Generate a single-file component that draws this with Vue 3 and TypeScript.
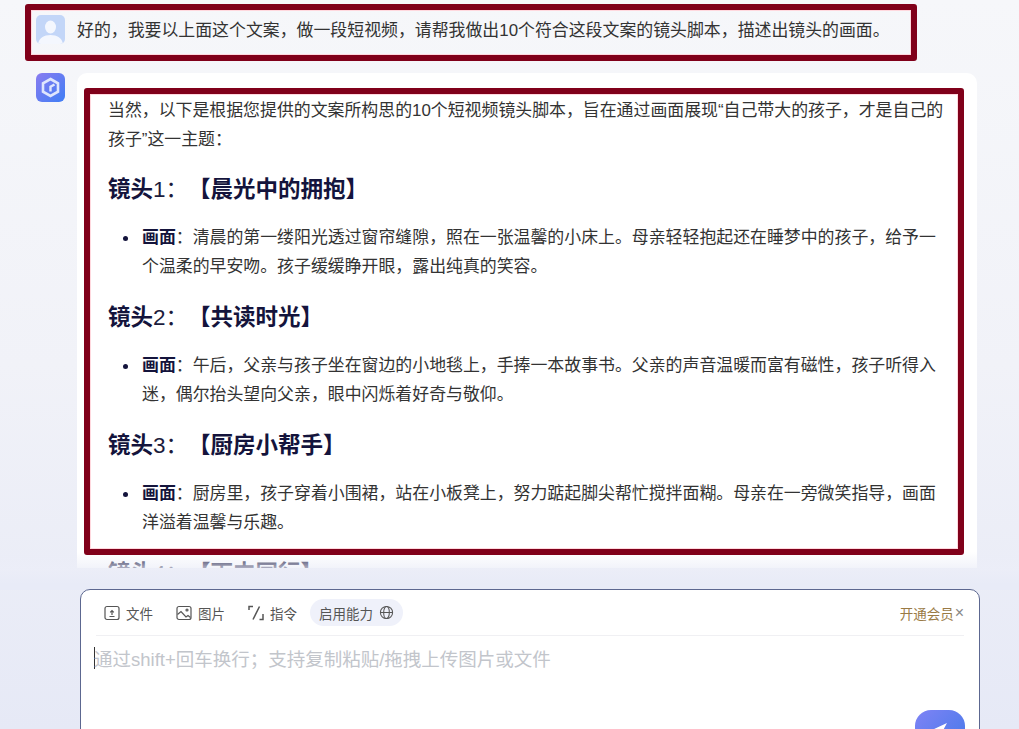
<script setup lang="ts">
interface Shot {
  no: number
  title: string
  body: string
}

const shots: Shot[] = [
  {
    no: 1,
    title: '【晨光中的拥抱】',
    body: '清晨的第一缕阳光透过窗帘缝隙，照在一张温馨的小床上。母亲轻轻抱起还在睡梦中的孩子，给予一个温柔的早安吻。孩子缓缓睁开眼，露出纯真的笑容。'
  },
  {
    no: 2,
    title: '【共读时光】',
    body: '午后，父亲与孩子坐在窗边的小地毯上，手捧一本故事书。父亲的声音温暖而富有磁性，孩子听得入迷，偶尔抬头望向父亲，眼中闪烁着好奇与敬仰。'
  },
  {
    no: 3,
    title: '【厨房小帮手】',
    body: '厨房里，孩子穿着小围裙，站在小板凳上，努力踮起脚尖帮忙搅拌面糊。母亲在一旁微笑指导，画面洋溢着温馨与乐趣。'
  }
]
</script>

<template>
  <div class="page">
    <div class="user-row">
      <div class="user-avatar">
        <svg viewBox="0 0 29 29" width="29" height="29">
          <ellipse cx="14.5" cy="12" rx="5.5" ry="6.500" fill="#f4f7fe" />
          <path d="M2 29c1-6 6-9 12.500-9S26 23 27 29z" fill="#f4f7fe" />
        </svg>
      </div>
      <p class="user-text">好的，我要以上面这个文案，做一段短视频，请帮我做出10个符合这段文案的镜头脚本，描述出镜头的画面。</p>
    </div>

    <div class="answer-row">
      <div class="bot-avatar">
        <svg viewBox="0 0 29 29" width="29" height="29" fill="none">
          <path d="M14.500 6l7.500 4.300v8.400L14.500 23 7 18.700v-8.400z" stroke="#dfe6fd" stroke-width="2.600" />
          <path d="M18.500 11.500l-4 2.300v4.700" stroke="#dfe6fd" stroke-width="2.400" />
        </svg>
      </div>
      <div class="answer-card">
        <p class="intro">当然，以下是根据您提供的文案所构思的10个短视频镜头脚本，旨在通过画面展现“自己带大的孩子，才是自己的孩子”这一主题：</p>
        <section v-for="shot in shots" :key="shot.no" class="shot">
          <h3>镜头<span class="num">{{ shot.no }}：</span>{{ shot.title }}</h3>
          <ul>
            <li><b>画面</b>：{{ shot.body }}</li>
          </ul>
        </section>
        <h3 class="next">镜头<span class="num">4：</span>【雨中同行】</h3>
      </div>
    </div>

    <div class="fade"></div>

    <div class="composer">
      <div class="toolbar">
        <span class="tool">
          <svg viewBox="0 0 16 16" width="16" height="16" fill="none" stroke="#555" stroke-width="1.200">
            <rect x="1" y="1.500" width="14" height="13" rx="2" />
            <path d="M8 10V5.500M6.200 7.300L8 5.500l1.800 1.800M5.500 11.500h5" />
          </svg>
          文件
        </span>
        <span class="tool">
          <svg viewBox="0 0 16 16" width="16" height="16" fill="none" stroke="#555" stroke-width="1.200">
            <rect x="1" y="1.500" width="14" height="13" rx="2" />
            <circle cx="11" cy="5" r="1" />
            <path d="M1.500 9.500L5 6.500l5 5.500 2-1.500 2.500 2" />
          </svg>
          图片
        </span>
        <span class="tool">
          <svg viewBox="0 0 16 16" width="16" height="16" fill="none" stroke="#555" stroke-width="1.500">
            <path d="M1 5V1.500h4M11.500 1.500L5 14.500M15 9v5.500h-3.500" />
          </svg>
          指令
        </span>
        <span class="pill">
          启用能力
          <svg viewBox="0 0 16 16" width="15" height="15" fill="none" stroke="#555" stroke-width="1.100">
            <circle cx="8" cy="8" r="6.500" />
            <ellipse cx="8" cy="8" rx="3" ry="6.500" />
            <path d="M1.500 8h13" />
          </svg>
        </span>
        <span class="vip">开通会员<i>×</i></span>
      </div>
      <div class="input-area">
        <span class="caret"></span>
        <span class="placeholder">通过shift+回车换行；支持复制粘贴/拖拽上传图片或文件</span>
      </div>
      <button class="send" type="button" aria-label="发送">
        <svg viewBox="0 0 16 16" width="16" height="16">
          <path d="M15 1L1 7.500l4.500 2L7.500 15z" fill="#fff" />
        </svg>
      </button>
    </div>

    <!-- annotation frames drawn over the screenshot -->
    <div class="frame frame-top"></div>
    <div class="frame frame-main"></div>
  </div>
</template>

<style scoped>
.page {
  position: relative;
  width: 1019px;
  height: 729px;
  overflow: hidden;
  background: linear-gradient(180deg, #f6f7fa 0%, #f1f2f8 50%, #e6e9f6 100%);
  font-family: "Liberation Sans", "Noto Sans CJK SC", sans-serif;
  color: #333;
  text-spacing-trim: space-all;
}

.user-row {
  display: flex;
  align-items: flex-start;
  gap: 12px;
  padding: 15px 0 0 36px;
  height: 73px;
  box-sizing: border-box;
}

.user-avatar {
  width: 29px;
  height: 29px;
  border-radius: 5px;
  overflow: hidden;
  background: #c3d6f8;
  flex: none;
}

.user-avatar svg,
.bot-avatar svg {
  display: block;
}

.user-text {
  margin: 0;
  font-size: 16.9px;
  line-height: 32px;
  color: #333;
  white-space: nowrap;
}

.answer-row {
  display: flex;
  align-items: flex-start;
  gap: 12px;
  padding-left: 36px;
}

.bot-avatar {
  width: 29px;
  height: 29px;
  border-radius: 6px;
  background: linear-gradient(135deg, #8a7cf0, #3f7ef5);
  flex: none;
}

.answer-card {
  width: 900px;
  height: 495px;
  box-sizing: border-box;
  overflow: hidden;
  background: #fff;
  border-radius: 10px 10px 0 0;
  padding: 23px 32px 0 31px;
}

.intro {
  margin: 0 0 -1px;
  font-size: 16.9px;
  line-height: 29px;
}

.shot h3,
.next {
  margin: 21px 0 0;
  font-size: 22.5px;
  line-height: 32px;
  font-weight: 700;
  color: #14143c;
}

.num {
  font-weight: 400;
  color: #1c1c3c;
}

.shot ul {
  margin: 18px 0 0;
  padding: 0 0 0 34px;
  list-style: none;
}

.shot li {
  position: relative;
  font-size: 16.9px;
  line-height: 28.5px;
  color: #333;
}

.shot li::before {
  content: "";
  position: absolute;
  left: -19px;
  top: 12px;
  width: 5px;
  height: 5px;
  border-radius: 50%;
  background: #14143c;
}

.shot li b {
  color: #14143c;
}

.fade {
  position: absolute;
  left: 0;
  right: 0;
  top: 552px;
  height: 38px;
  background: linear-gradient(180deg, rgba(238, 240, 248, 0) 0%, rgba(236, 238, 248, 0.75) 45%, #e8ebf7 85%);
}

.composer {
  position: absolute;
  left: 80px;
  top: 589px;
  width: 900px;
  height: 170px;
  box-sizing: border-box;
  background: #fff;
  border: 1px solid #5c6790;
  border-radius: 10px;
  padding: 0 15px;
}

.toolbar {
  display: flex;
  align-items: center;
  height: 45px;
  padding: 0 0 0 8px;
  border-bottom: 1px solid #f0f0f3;
  font-size: 13.5px;
  color: #555;
}

.tool {
  display: flex;
  align-items: center;
  gap: 6px;
  margin-right: 23px;
}

.tool:nth-child(3) {
  margin-right: 13px;
}

.pill {
  display: flex;
  align-items: center;
  gap: 6px;
  height: 27px;
  padding: 0 9px;
  border-radius: 14px;
  background: #eff1fa;
}

.vip {
  display: flex;
  align-items: center;
  margin-left: auto;
  color: #9a7a45;
}

.vip i {
  font-style: normal;
  font-size: 16px;
  line-height: 16px;
  margin-left: 1px;
  color: #888;
}

.input-area {
  display: flex;
  align-items: center;
  height: 44px;
  margin-left: -2px;
  font-size: 18.5px;
  color: #c2c5cb;
}

.caret {
  width: 1px;
  height: 22px;
  background: #333;
}

.placeholder {
  margin-left: -1px;
}

.send {
  position: absolute;
  right: 14px;
  top: 120px;
  width: 50px;
  height: 50px;
  padding: 12px 0 0;
  border: 0;
  border-radius: 16px;
  background: linear-gradient(135deg, #7f83f5, #3f78e8);
  display: flex;
  align-items: flex-start;
  justify-content: center;
}

.frame {
  position: absolute;
  box-sizing: border-box;
  border: 6px solid #80001a;
  border-radius: 3px;
  box-shadow: inset 0 0 0 1px #ffd8de;
  pointer-events: none;
}

.frame-top {
  left: 25px;
  top: 4px;
  width: 892px;
  height: 57px;
}

.frame-main {
  left: 84px;
  top: 88px;
  width: 880px;
  height: 467px;
}
</style>

<style>
html,
body {
  margin: 0;
  overflow: hidden;
}
</style>
